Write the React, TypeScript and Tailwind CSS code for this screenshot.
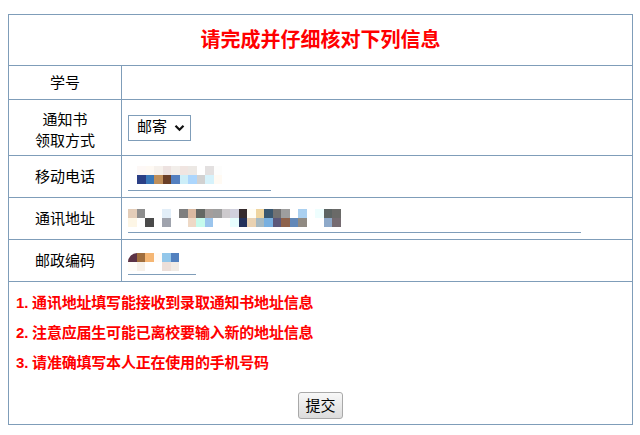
import React from 'react';

// pixelated (masked) values, two rows of blocks each
const PHONE_MOSAIC = [
    ['#fdf8f6', '#fef9f3', '#f6f1ec', '#ede2e0', '#f2eeea', '#f0e5e1', '#ece8e4', '#ffffff', '#e3e0e0', '#fdfdfc'],
    ['#2b3f85', '#3a78b9', '#c08f5a', '#6a3f27', '#5480c0', '#cdeef8', '#acd6fd', '#d1d1d1', '#d6f2fb', '#fffaf3'],
];

const ADDRESS_MOSAIC = [
    ['#e3cdb9', '#8e8e8e', '#ffffff', '#ffffff', '#e2eef8', '#ffffff', '#7e7e7e', '#d9b9a1', '#646864', '#a49e9c', '#9e9e9e', '#cdcacd', '#d0d0dd', '#352b2d', '#fffdf4', '#efd59f', '#3a5870', '#727272', '#9e9e9e', '#ffffff', '#aad0f0', '#ffffff', '#eefefe', '#5c6463', '#6a6a68'],
    ['#fdf6e6', '#ffffff', '#4a4a4a', '#ffffff', '#9fa3ad', '#ffffff', '#ffffff', '#eed9c6', '#c6fbec', '#9bc5ed', '#ffffff', '#ffffff', '#e7fefe', '#23315a', '#e9d2b2', '#a6b9c1', '#78b0e0', '#5c5879', '#8e624b', '#6288b8', '#908a82', '#ffffff', '#ffffff', '#8ea9c9', '#756b71'],
];

const POSTAL_MOSAIC = [
    ['#5c3346', '#a06e3d', '#f5b673', '#fffbf7', '#93c7ea', '#5281bf'],
    ['#fffdf8', '#f7f1e9', '#ffffff', '#ffffff', '#eddfd9', '#f0ebe5'],
];

const NOTES = [
    '1. 通讯地址填写能接收到录取通知书地址信息',
    '2. 注意应届生可能已离校要输入新的地址信息',
    '3. 请准确填写本人正在使用的手机号码',
];

function Mosaic({ rows, rounded }: { rows: string[][]; rounded?: boolean }) {
    return (
        <div className="flex flex-col">
            {rows.map((row, r) => (
                <div key={r} className="flex">
                    {row.map((c, i) => (
                        <div
                            key={i}
                            className={`w-[8.5px] h-[9px] ${rounded && r === 0 && i === 0 ? 'rounded-tl-full' : ''}`}
                            style={{ backgroundColor: c }}
                        />
                    ))}
                </div>
            ))}
        </div>
    );
}

function Row({ label, height, children }: { label: React.ReactNode; height: string; children?: React.ReactNode }) {
    return (
        <div className={`flex border-b border-[#7f9db9] ${height}`}>
            <div className="w-[113px] shrink-0 border-r border-[#7f9db9] flex items-center justify-center text-center text-[15px] leading-[21px] text-black">
                {label}
            </div>
            <div className="flex-1 flex pl-[6px]">{children}</div>
        </div>
    );
}

export default function App() {
    return (
        <div className="w-[640px] h-[435px] bg-white pt-[14px] px-[8px] font-[family-name:'Liberation_Sans','Noto_Sans_CJK_SC',sans-serif]">
            <div className="w-[625px] border border-[#7f9db9]">
                {/* Title */}
                <div className="h-[51px] border-b border-[#7f9db9] flex items-center justify-center">
                    <span className="text-[20px] font-bold text-[#ff0000]">请完成并仔细核对下列信息</span>
                </div>

                <Row label="学号" height="h-[34px]" />

                <Row label={<div className="pt-[4px]">通知书<br />领取方式</div>} height="h-[56px]">
                    <div className="flex items-center">
                        <div className="w-[63px] h-[26px] border border-[#7f9db9] flex items-center pl-[8px] gap-[7px] text-[15px] text-black">
                            <span>邮寄</span>
                            <svg width="11" height="8" viewBox="0 0 11 8" fill="none">
                                <path d="M1.5 1.8 L5.5 5.8 L9.5 1.8" stroke="#111" strokeWidth="2.2" />
                            </svg>
                        </div>
                    </div>
                </Row>

                <Row label="移动电话" height="h-[42px]">
                    <div className="flex items-end pb-[6px]">
                        <div className="w-[143px] border-b border-[#7f9db9] pl-[9px] pb-[6px]">
                            <Mosaic rows={PHONE_MOSAIC} />
                        </div>
                    </div>
                </Row>

                <Row label="通讯地址" height="h-[42px]">
                    <div className="flex items-end pb-[6px]">
                        <div className="w-[453px] border-b border-[#7f9db9] pb-[5px]">
                            <Mosaic rows={ADDRESS_MOSAIC} />
                        </div>
                    </div>
                </Row>

                <Row label="邮政编码" height="h-[42px]">
                    <div className="flex items-end pb-[6px]">
                        <div className="w-[68px] border-b border-[#7f9db9] pb-[3px]">
                            <Mosaic rows={POSTAL_MOSAIC} rounded />
                        </div>
                    </div>
                </Row>

                {/* Notes */}
                <div className="h-[142px] pt-[6px] px-[7px] flex flex-col">
                    {NOTES.map((n) => (
                        <div key={n} className="h-[30px] leading-[30px] text-[15px] font-bold text-[#ff0000] tracking-[-0.2px]">
                            {n}
                        </div>
                    ))}
                    <div className="flex justify-center mt-[14px]">
                        <button className="h-[27px] px-[6px] rounded-[3px] border border-[#a9a9a9] bg-gradient-to-b from-[#f8f8f8] to-[#dcdcdc] text-[15px] leading-none text-black">
                            提交
                        </button>
                    </div>
                </div>
            </div>
        </div>
    );
}
